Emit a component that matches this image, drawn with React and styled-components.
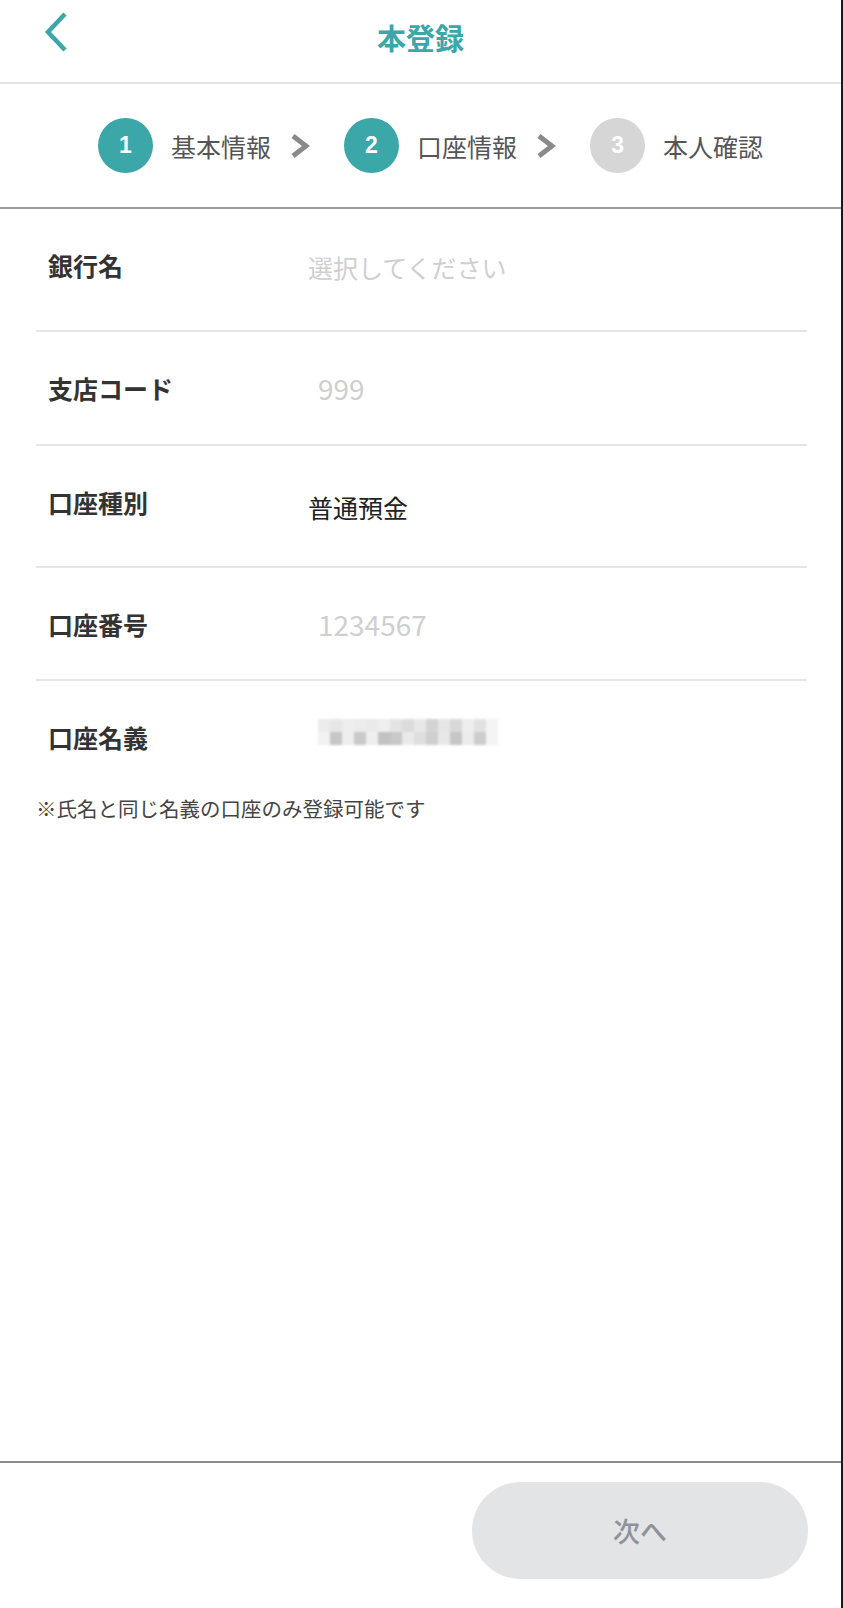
import React from "react";
import styled, { createGlobalStyle } from "styled-components";

const teal = "#3ba7a8";

const GlobalStyle = createGlobalStyle`
    body{
        margin: 0;
        background: #ffffff;
        font-family: "Noto Sans CJK JP", "Noto Sans", sans-serif;
        color: #333333;
    }
`;

const Page = styled.div`
    width: 843px;
    min-height: 1608px;
    box-sizing: border-box;
    border-right: 2px solid #1a1a1a;
    display: flex;
    flex-direction: column;
    background: #ffffff;
`;

const Header = styled.header`
    height: 84px;
    box-sizing: border-box;
    padding-bottom: 8px;
    border-bottom: 2px solid #e2e2e2;
    display: grid;
    grid-template-columns: 1fr auto 1fr;
    align-items: center;
`;

const BackButton = styled.button`
    justify-self: start;
    margin: 0 0 10px 43px;
    padding: 0;
    border: none;
    background: none;
    display: flex;
    cursor: pointer;
`;

const Title = styled.h1`
    margin: 0;
    font-size: 29px;
    font-weight: 700;
    line-height: 36px;
    color: ${teal};
`;

const Steps = styled.nav`
    height: 125px;
    box-sizing: border-box;
    border-bottom: 2px solid #9a9a9a;
    display: flex;
    align-items: center;
    padding-left: 98px;
`;

const Step = styled.div`
    display: flex;
    align-items: center;
    gap: 18px;
`;

const StepNum = styled.span`
    width: 55px;
    height: 55px;
    border-radius: 50%;
    background: ${(p) => (p.$active ? teal : "#d6d6d6")};
    color: #ffffff;
    display: flex;
    align-items: center;
    justify-content: center;
    font-family: "Liberation Sans", "Noto Sans", sans-serif;
    font-size: 23px;
    font-weight: 700;
`;

const StepLabel = styled.span`
    font-size: 25px;
    line-height: 32px;
    color: #555555;
`;

const StepArrow = styled.svg`
    margin: 0 34px 0 19px;
    flex-shrink: 0;
`;

const Form = styled.section`
    flex: 1;
`;

const Row = styled.div`
    margin: 0 34px 0 36px;
    padding: 38px 0 0 12px;
    height: ${(p) => p.$height}px;
    box-sizing: border-box;
    border-bottom: ${(p) => (p.$divider ? "2px solid #e6e6e6" : "none")};
    display: grid;
    grid-template-columns: 260px 1fr;
    align-items: start;
`;

const Label = styled.span`
    font-size: 25px;
    font-weight: 700;
    line-height: 36px;
    color: #333333;
`;

const Value = styled.span`
    font-size: ${(p) => (p.$input ? 28 : 25)}px;
    line-height: 36px;
    padding-left: ${(p) => (p.$input ? 10 : 0)}px;
    margin-top: ${(p) => p.$shift || 0}px;
    color: ${(p) => (p.$placeholder ? "#cfcfcf" : "#222222")};
`;

const Mosaic = styled.div`
    margin: 0 0 0 10px;
    display: grid;
    grid-template-columns: repeat(15, 12px);
    grid-auto-rows: 13px;
    width: 180px;
    filter: blur(1.2px);
`;

const Note = styled.p`
    margin: 5px 0 0 36px;
    font-size: 20.5px;
    line-height: 28px;
    color: #444444;
`;

const Footer = styled.footer`
    border-top: 2px solid #8c8c8c;
    padding: 19px 33px 29px;
    display: flex;
    justify-content: flex-end;
`;

const NextButton = styled.button`
    width: 336px;
    height: 97px;
    border: none;
    border-radius: 49px;
    background: #e3e4e6;
    color: #8d939a;
    font-family: "Noto Sans CJK JP", sans-serif;
    font-size: 27px;
    font-weight: 500;
`;

const Chevron = () => (
    <StepArrow width="20" height="24" viewBox="0 0 20 24">
        <polyline points="3,2 16,12 3,22" fill="none" stroke="#8a8a8a" strokeWidth="5" />
    </StepArrow>
);

// pixelated name, as in the screenshot
const shades = [
    ["#ececec", "#e6e6e6", "#eeeeee", "#ececec", "#eaeaea", "#efefef", "#e4e4e4", "#dcdcdc", "#e8e8e8", "#d4d4d4", "#e6e6e6", "#d8d8d8", "#eeeeee", "#e2e2e2", "#f4f4f4"],
    ["#f2f2f2", "#c6c6c6", "#eeeeee", "#cacaca", "#eeeeee", "#c2c2c2", "#c8c8c8", "#eaeaea", "#dedede", "#cfcfcf", "#e8e8e8", "#c6c6c6", "#ececec", "#cdcdcd", "#f4f4f4"],
];

const steps = [
    { n: 1, label: "基本情報", active: true },
    { n: 2, label: "口座情報", active: true },
    { n: 3, label: "本人確認", active: false },
];

const App = () => {
    return (
        <Page>
            <GlobalStyle />
            <Header>
                <BackButton aria-label="戻る">
                    <svg width="26" height="42" viewBox="0 0 26 42">
                        <polyline points="22,3 5,21 22,39" fill="none" stroke={teal} strokeWidth="4.5" />
                    </svg>
                </BackButton>
                <Title>本登録</Title>
                <span />
            </Header>

            <Steps>
                {steps.map((s, i) => (
                    <React.Fragment key={s.n}>
                        <Step>
                            <StepNum $active={s.active}>{s.n}</StepNum>
                            <StepLabel>{s.label}</StepLabel>
                        </Step>
                        {i < steps.length - 1 && <Chevron />}
                    </React.Fragment>
                ))}
            </Steps>

            <Form>
                <Row $height={123} $divider>
                    <Label>銀行名</Label>
                    <Value $placeholder $shift={2}>選択してください</Value>
                </Row>
                <Row $height={114} $divider>
                    <Label>支店コード</Label>
                    <Value $input $placeholder>999</Value>
                </Row>
                <Row $height={122} $divider>
                    <Label>口座種別</Label>
                    <Value $shift={5}>普通預金</Value>
                </Row>
                <Row $height={113} $divider>
                    <Label>口座番号</Label>
                    <Value $input $placeholder>1234567</Value>
                </Row>
                <Row $height={108}>
                    <Label>口座名義</Label>
                    <Mosaic aria-hidden="true">
                        {shades.flatMap((row, r) =>
                            row.map((c, k) => <span key={r + "-" + k} style={{ background: c }} />)
                        )}
                    </Mosaic>
                </Row>
                <Note>※氏名と同じ名義の口座のみ登録可能です</Note>
            </Form>

            <Footer>
                <NextButton disabled>次へ</NextButton>
            </Footer>
        </Page>
    );
};

export default App;
